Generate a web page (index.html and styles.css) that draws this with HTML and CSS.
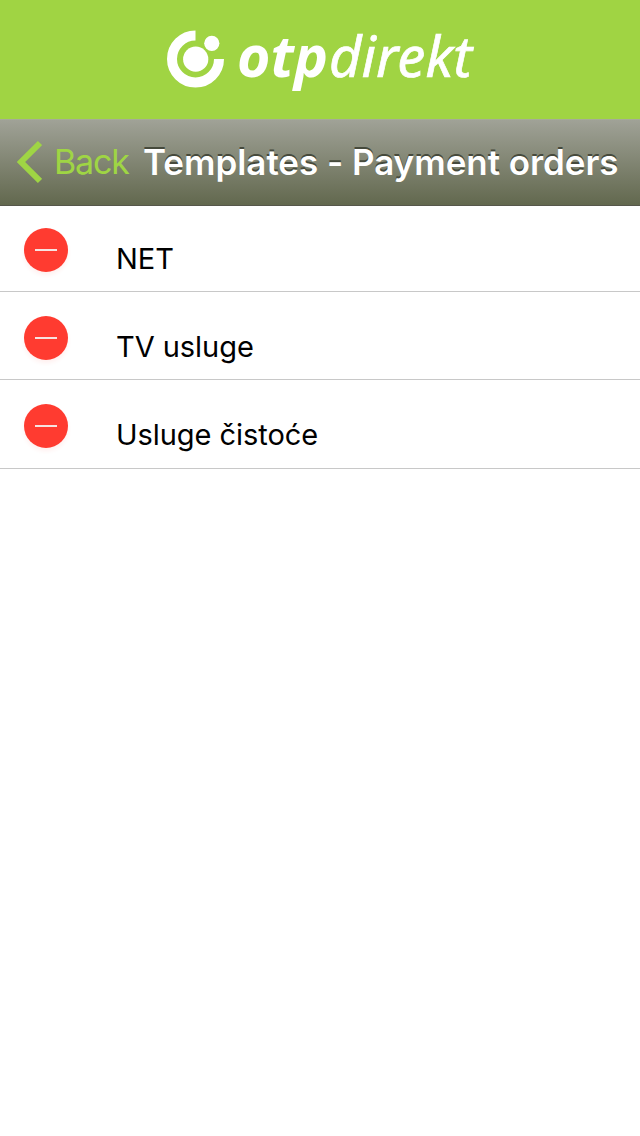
FILE: index.html
```html
<!DOCTYPE html>
<html lang="en">
<head>
    <meta charset="UTF-8">
    <meta name="viewport" content="width=device-width, initial-scale=1.0">
    <title>Templates - Payment orders</title>
    <link rel="stylesheet" href="styles.css">
</head>
<body>
    <header class="brand">
        <svg class="logo" width="320" height="119" viewBox="160 0 320 119" role="img" aria-label="otpdirekt">
            <path d="M195.5 35.5A23.5 23.5 0 1 0 219 59" fill="none" stroke="#fff" stroke-width="10"/>
            <circle cx="195.7" cy="59.2" r="12.6"/>
            <circle cx="211.8" cy="43.3" r="7.6"/>
            <text class="logo-otp" x="237" y="76.5" textLength="91" lengthAdjust="spacingAndGlyphs">otp</text>
            <text class="logo-direkt" x="329" y="76.5" textLength="143" lengthAdjust="spacingAndGlyphs">direkt</text>
        </svg>
    </header>
    <nav class="navbar">
        <a class="back" href="#">
            <svg width="26" height="44" viewBox="0 0 26 44">
                <path d="M24 3L5 22L24 41" fill="none" stroke="#9fd544" stroke-width="6"/>
            </svg>
            <span class="back-label">Back</span>
        </a>
        <h1 class="title">Templates - Payment orders</h1>
    </nav>
    <ul class="list">
        <li class="row">
            <button class="remove" aria-label="Delete"></button>
            <span class="name">NET</span>
        </li>
        <li class="row">
            <button class="remove" aria-label="Delete"></button>
            <span class="name">TV usluge</span>
        </li>
        <li class="row">
            <button class="remove" aria-label="Delete"></button>
            <span class="name">Usluge čistoće</span>
        </li>
    </ul>
</body>
</html>
```
FILE: styles.css
```css
body {
    margin: 0;
    min-height: 1136px;
    background: #fff;
    font-family: Inter, Roboto, sans-serif;
}
.brand {
    display: flex;
    justify-content: center;
    height: 119px;
    background: #a0d443;
}
.logo {
    display: block;
    overflow: visible;
    fill: #fff;
}
.logo-otp,
.logo-direkt {
    font-family: "Noto Sans", "Open Sans", sans-serif;
    font-style: italic;
    font-size: 57px;
}
.logo-otp {
    font-weight: 700;
}
.logo-direkt {
    stroke: #fff;
    stroke-width: 0.7;
}
.navbar {
    display: flex;
    align-items: center;
    box-sizing: border-box;
    height: 87px;
    padding: 0 0 2px 16px;
    border-top: 1px solid #a6ab98;
    border-bottom: 1px solid #56574b;
    background: linear-gradient(#a0a297, #62684e);
    white-space: nowrap;
}
.back {
    display: flex;
    align-items: center;
    width: 127px;
    color: #9fd544;
    text-decoration: none;
}
.back-label {
    margin-left: 12px;
    font-size: 34px;
    font-weight: 400;
    letter-spacing: -1.2px;
}
.title {
    margin: 0;
    color: #fff;
    font-size: 35px;
    font-weight: 600;
    letter-spacing: -0.05px;
    text-shadow: 0 -2px 0 #464a3c;
}
.list {
    margin: 0;
    padding: 0;
    list-style: none;
}
.row {
    display: flex;
    align-items: flex-start;
    box-sizing: border-box;
    height: 88px;
    padding: 24px 0 0 24px;
    border-bottom: 1px solid #c8c8c8;
}
.row:first-child {
    height: 86px;
    padding-top: 22px;
}
.row:last-child {
    height: 89px;
}
.remove {
    display: flex;
    align-items: center;
    justify-content: center;
    width: 44px;
    height: 44px;
    padding: 0;
    border: 0;
    border-radius: 50%;
    background: #ff3b30;
    box-shadow: 0 3px 4px rgba(255, 59, 48, 0.08);
}
.remove::before {
    content: "";
    width: 22px;
    height: 2px;
    background: #f6e3e0;
}
.name {
    margin: 13px 0 0 48px;
    color: #000;
    font-size: 29px;
    line-height: 36px;
    letter-spacing: -0.05px;
}
```
